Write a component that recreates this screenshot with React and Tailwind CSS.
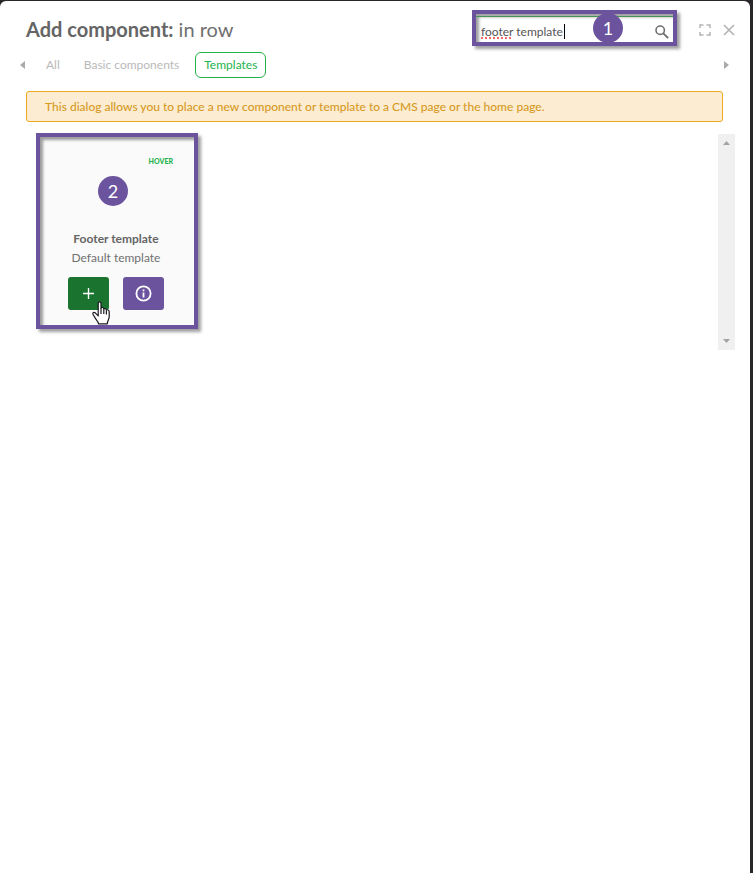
import React, { useState } from "react";

const badge =
  "pointer-events-none absolute flex size-[30px] items-center justify-center rounded-full bg-[#6b539e] text-lg leading-6 text-white";
const frame =
  "border-4 border-[#6b539e] shadow-[3px_3px_3px_rgba(0,0,0,0.38),inset_3px_3px_3px_rgba(0,0,0,0.38)]";

function SearchIcon() {
  return (
    <svg width="14" height="14" viewBox="0 0 14 14" fill="none" stroke="#707070" aria-hidden="true">
      <circle cx="5.2" cy="5.2" r="4.2" strokeWidth="1.6" />
      <path d="M8.3 8.3 13.2 13.2" strokeWidth="1.9" />
    </svg>
  );
}

function ExpandIcon() {
  return (
    <svg width="12" height="12" viewBox="0 0 12 12" fill="none" stroke="#b4b4b4" strokeWidth="1.5" aria-hidden="true">
      <path d="M1 4V1h3.5M7.5 1H11v3M11 8v3H7.5M4.5 11H1V8" />
    </svg>
  );
}

function CloseIcon() {
  return (
    <svg width="12" height="12" viewBox="0 0 12 12" fill="none" stroke="#b4b4b4" strokeWidth="1.7" aria-hidden="true">
      <path d="M1 1 11 11M11 1 1 11" />
    </svg>
  );
}

function Pointer() {
  return (
    <svg
      className="pointer-events-none absolute left-6 top-6"
      width="18"
      height="24"
      viewBox="0 0 18 24"
      aria-hidden="true"
    >
      <path
        d="M6.2 14.8V2.5C6.2 .2 9 .2 9 2.5V7.5C9.3 6 11.8 6.1 11.8 8.3 12.3 7.1 14.4 7.3 14.4 9.2 15.3 8.3 17.2 8.9 17.2 10.7V15.5C17.2 18.5 15.5 19.5 15.3 22.8H6.6C6.2 20 3.6 18.3 2.4 15.8L1 13.3C.3 11.7 2 10.8 3.2 11.8L6.2 14.8Z"
        fill="#fff"
        stroke="#181820"
        strokeWidth="1.2"
        strokeLinejoin="round"
      />
      <path d="M9 7.5V13M11.8 8.5V13M14.4 9.5V13.5" stroke="#181820" strokeWidth="1.2" />
    </svg>
  );
}

export default function App() {
  const [query, setQuery] = useState("footer template");
  return (
    <div className="min-h-screen bg-[#29272a] pr-[3px] pt-px font-['Lato',sans-serif] text-xs text-[#707070]">
      <main className="min-h-[calc(100vh-1px)] rounded-t-md bg-white pl-[26px] pr-[15px] pt-[9px]">
        <header className="flex h-9 items-center">
          <h1 className="flex-1 whitespace-nowrap pt-0.5 text-xl leading-7">
            <strong className="font-bold text-[#656565]">Add component:</strong> in row
          </h1>
          <div className={`relative flex h-9 w-[205px] flex-col pt-0.5 ${frame}`}>
            <div className="flex w-full flex-1 items-center border-t border-[#459354] pl-[5px] pr-1 pt-1">
              <input
                type="text"
                aria-label="Search components"
                value={query}
                onChange={(e) => setQuery(e.target.value)}
                className="min-w-0 flex-1 bg-transparent text-xs text-[#555] outline-none"
              />
              <button type="button" aria-label="Search">
                <SearchIcon />
              </button>
            </div>
            <span className="absolute left-[5px] top-[23px] h-[2px] w-[32px] bg-[repeating-linear-gradient(90deg,#f06a6a_0_2px,transparent_2px_4px)]" />
            <span className="absolute left-[88px] top-[10px] h-[15px] w-px bg-black" />
            <span className={`${badge} -top-px left-[117px]`}>1</span>
          </div>
          <div className="ml-[22px] flex items-center gap-3 pt-1">
            <button type="button" aria-label="Full screen"><ExpandIcon /></button>
            <button type="button" aria-label="Close"><CloseIcon /></button>
          </div>
        </header>

        <nav aria-label="Component categories" className="-ml-1.5 mt-1.5 flex h-[26px] items-center text-[#b9b9b9]">
          <button type="button" aria-label="Previous">
            <svg width="5" height="8" viewBox="0 0 5 8" fill="#aaa" aria-hidden="true"><path d="M5 0V8L0 4Z" /></svg>
          </button>
          <button type="button" className="ml-[21px]">All</button>
          <button type="button" className="ml-6">Basic components</button>
          <button type="button" className="ml-4 h-[26px] rounded-md border border-[#22b24c] px-2 text-[#22b24c]">
            Templates
          </button>
          <button type="button" aria-label="Next" className="ml-auto mr-1.5">
            <svg width="5" height="8" viewBox="0 0 5 8" fill="#aaa" aria-hidden="true"><path d="M0 0V8L5 4Z" /></svg>
          </button>
        </nav>

        <p role="status" className="mr-3 mt-[13px] flex min-h-[31px] items-center rounded-[3px] border border-[#eda91f] bg-[#fcecd1] px-[18px] font-medium text-[#d69a25]">
          This dialog allows you to place a new component or template to a CMS page or the home page.
        </p>

        <section className="mt-3 flex h-[216px] justify-between">
          <article className={`relative -mt-px ml-2.5 h-[196px] w-[162px] bg-[#fafafa] text-center ${frame}`}>
            <div className="pr-[21px] pt-[18px] text-right text-[7px] leading-3 font-black text-[#22b24c]">HOVER</div>
            <span className={`${badge} left-[58px] top-[39px]`}>2</span>
            <h2 className="mt-[62px] pr-0.5 text-xs leading-5 font-bold text-[#656565]">Footer template</h2>
            <p className="pr-0.5 leading-[18px]">Default template</p>
            <div className="mt-2.5 flex justify-center gap-3.5 pr-0.5 pb-3.5">
              <div className="relative">
                <button type="button" aria-label="Add" className="flex h-[33px] w-[41px] items-center justify-center rounded-[3px] bg-[#1a732f]">
                  <svg width="11" height="11" viewBox="0 0 12 12" stroke="#fff" strokeWidth="1.5" aria-hidden="true"><path d="M6 0V12M0 6H12" /></svg>
                </button>
                <Pointer />
              </div>
              <button type="button" aria-label="Information" className="flex h-[33px] w-[41px] items-center justify-center rounded-[3px] bg-[#6b539e]">
                <svg width="17" height="17" viewBox="0 0 17 17" fill="none" stroke="#fff" strokeWidth="1.8" aria-hidden="true">
                  <circle cx="8.5" cy="8.5" r="7.1" /><path d="M8.5 4.5V6.2M8.5 7.5V12.5" />
                </svg>
              </button>
            </div>
          </article>
          <div aria-hidden="true" className="flex w-[17px] flex-col items-center justify-between bg-[#f0f0f0] py-[7px]">
            <svg width="7" height="4" viewBox="0 0 7 4" fill="#a3a3a3"><path d="M0 4H7L3.5 0Z" /></svg>
            <svg width="7" height="4" viewBox="0 0 7 4" fill="#a3a3a3"><path d="M0 0H7L3.5 4Z" /></svg>
          </div>
        </section>
      </main>
    </div>
  );
}
